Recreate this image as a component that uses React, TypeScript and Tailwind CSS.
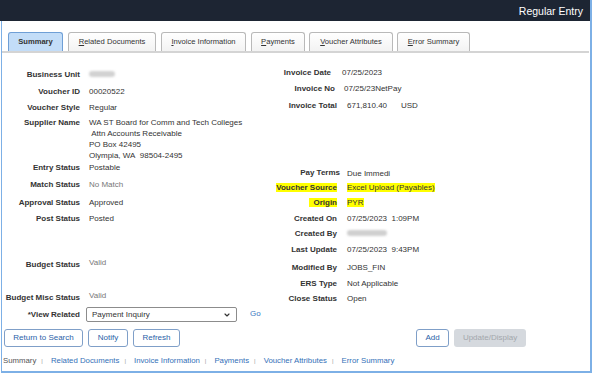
import React from 'react';
import { ChevronDown } from 'lucide-react';

const tabs = [
  { label: 'Summary', w: 'w-[55px]', ml: 'ml-[6px]', active: true },
  { label: 'Related Documents', w: 'w-[88px]', ml: 'ml-[5px]' },
  { label: 'Invoice Information', w: 'w-[85px]', ml: 'ml-[5px]' },
  { label: 'Payments', w: 'w-[54px]', ml: 'ml-[5px]' },
  { label: 'Voucher Attributes', w: 'w-[84px]', ml: 'ml-[4px]' },
  { label: 'Error Summary', w: 'w-[73px]', ml: 'ml-[4px]' },
];

const footerLinks = ['Related Documents', 'Invoice Information', 'Payments', 'Voucher Attributes', 'Error Summary'];

function LeftRow({ label, h, children }: { label: string; h: string; children?: React.ReactNode }) {
  return (
    <div className={`flex ${h} leading-[11px]`}>
      <div className="w-[78px] shrink-0 text-right font-bold text-[#333]">{label}</div>
      <div className="ml-[9px] text-[#333]">{children}</div>
    </div>
  );
}

function RightRow({
  label,
  h,
  lw = 'w-[87px]',
  gap = 'ml-[10px]',
  children,
}: {
  label: React.ReactNode;
  h: string;
  lw?: string;
  gap?: string;
  children?: React.ReactNode;
}) {
  return (
    <div className={`flex ${h} leading-[11px]`}>
      <div className={`${lw} shrink-0 text-right font-bold text-[#333]`}>{label}</div>
      <div className={`${gap} text-[#333]`}>{children}</div>
    </div>
  );
}

export default function App() {
  return (
    <div className="w-[593px] h-[373px] bg-white overflow-hidden font-['Liberation_Sans',Arial,sans-serif] text-[8px]">
      <div className="w-[592px] h-[373px] border-r-2 border-[#7db0e6] flex flex-col">
        <div className="h-[21px] shrink-0 bg-[#1d2533] text-white text-[10.5px] flex items-center justify-end pr-[7px] pt-[3px]">
          Regular Entry
        </div>

        <div className="flex-1 ml-[1px] border-l border-b-2 border-[#7db0e6] flex flex-col">
          {/* tabs */}
          <div className="h-[32px] shrink-0 flex items-end border-b-2 border-[#d4d4d4] mr-[1px]">
            {tabs.map((t) => (
              <div
                key={t.label}
                className={`${t.w} ${t.ml} h-[19px] flex items-center justify-center rounded-t-[3px] border border-b-0 text-[7.6px] text-[#333] ${
                  t.active
                    ? 'bg-[#c3ddf8] border-[#6f9fd6] font-bold'
                    : 'bg-gradient-to-b from-white to-[#f3f3f3] border-[#b9b9b9]'
                }`}
              >
                {t.active ? (
                  t.label
                ) : (
                  <span>
                    <span className="underline">{t.label[0]}</span>
                    {t.label.slice(1)}
                  </span>
                )}
              </div>
            ))}
          </div>

          {/* content */}
          <div className="h-[276px] shrink-0 flex">
            <div className="w-[248px] shrink-0 pt-[16px] flex flex-col">
              <LeftRow label="Business Unit" h="h-[17px]">
                <div className="mt-[2px] w-[26px] h-[6px] rounded-full bg-[#d2d2d2] blur-[1px]" />
              </LeftRow>
              <LeftRow label="Voucher ID" h="h-[16px]">00020522</LeftRow>
              <LeftRow label="Voucher Style" h="h-[15px]">Regular</LeftRow>
              <LeftRow label="Supplier Name" h="h-[45px]">
                <div>WA ST Board for Comm and Tech Colleges</div>
                <div>&nbsp;Attn Accounts Receivable</div>
                <div>PO Box 42495</div>
                <div>Olympia, WA&nbsp; 98504-2495</div>
              </LeftRow>
              <LeftRow label="Entry Status" h="h-[17px]">Postable</LeftRow>
              <LeftRow label="Match Status" h="h-[18px]">
                <span className="text-[#777]">No Match</span>
              </LeftRow>
              <LeftRow label="Approval Status" h="h-[16px]">Approved</LeftRow>
              <LeftRow label="Post Status" h="h-[46px]">Posted</LeftRow>
              <LeftRow label="Budget Status" h="h-[33px]">
                <span className="block -translate-y-[2px] text-[#777]">Valid</span>
              </LeftRow>
              <LeftRow label="Budget Misc Status" h="h-[15px]">
                <span className="block -translate-y-[2px] text-[#777]">Valid</span>
              </LeftRow>
              <div className="flex items-center h-[15px] w-[280px]">
                <div className="w-[78px] shrink-0 text-right font-bold text-[#333]">*View Related</div>
                <div className="ml-[6px] w-[151px] shrink-0 h-[15px] border border-[#8c8c8c] rounded-[2px] flex items-center justify-between pl-[5px] pr-[5px] text-[#333]">
                  <span>Payment Inquiry</span>
                  <ChevronDown size={8} strokeWidth={3.5} className="text-[#333]" />
                </div>
                <span className="ml-[13px] -translate-y-[1px] text-[#3a78c2]">Go</span>
              </div>
            </div>

            <div className="flex-1 pt-[14px] flex flex-col">
              <RightRow label="Invoice Date" h="h-[16px]" lw="w-[81px]" gap="ml-[11px]">
                07/25/2023
              </RightRow>
              <RightRow label="Invoice No" h="h-[17px]" lw="w-[85px]" gap="ml-[9px]">
                07/25/23NetPay
              </RightRow>
              <RightRow label="Invoice Total" h="h-[67px]">
                <div className="flex">
                  <span className="w-[54px]">671,810.40</span>
                  <span>USD</span>
                </div>
              </RightRow>
              <RightRow label="Pay Terms" h="h-[15px]" lw="w-[90px]" gap="ml-[7px]">
                <span className="block translate-y-[1px]">Due Immedi</span>
              </RightRow>
              <RightRow label={<span className="bg-[#ffff00]">Voucher Source</span>} h="h-[15px]">
                <span className="bg-[#ffff00]">Excel Upload (Payables)</span>
              </RightRow>
              <RightRow label={<span className="bg-[#ffff00] pl-[4px]">Origin</span>} h="h-[16px]">
                <span className="bg-[#ffff00] pr-[1px]">PYR</span>
              </RightRow>
              <RightRow label="Created On" h="h-[15px]">
                07/25/2023&nbsp; 1:09PM
              </RightRow>
              <RightRow label="Created By" h="h-[16px]">
                <div className="mt-[2px] w-[40px] h-[6px] rounded-full bg-[#d0d0d0] blur-[1px]" />
              </RightRow>
              <RightRow label="Last Update" h="h-[18px]">
                07/25/2023&nbsp; 9:43PM
              </RightRow>
              <RightRow label="Modified By" h="h-[16px]">
                JOBS_FIN
              </RightRow>
              <RightRow label="ERS Type" h="h-[15px]">
                Not Applicable
              </RightRow>
              <RightRow label="Close Status" h="h-[15px]">
                Open
              </RightRow>
            </div>
          </div>

          {/* buttons */}
          <div className="h-[18px] shrink-0 flex items-stretch pl-[2px] pr-[64px] text-[8px]">
            <button className="w-[79px] border border-[#7f9fc8] rounded-[3px] bg-white text-[#2a62a8]">
              Return to Search
            </button>
            <button className="ml-[5px] w-[40px] border border-[#7f9fc8] rounded-[3px] bg-white text-[#2a62a8]">
              Notify
            </button>
            <button className="ml-[5px] w-[47px] border border-[#7f9fc8] rounded-[3px] bg-white text-[#2a62a8]">
              Refresh
            </button>
            <button className="ml-auto w-[33px] border border-[#7f9fc8] rounded-[3px] bg-white text-[#2a62a8]">
              Add
            </button>
            <button className="ml-[5px] w-[72px] rounded-[3px] bg-[#d5d9de] text-[#a3a7ac]">
              Update/Display
            </button>
          </div>

          {/* footer links */}
          <div className="mt-[9px] pl-[1px] flex items-center leading-[10px] text-[7.8px]">
            <span className="text-[#555]">Summary</span>
            {footerLinks.map((l) => (
              <React.Fragment key={l}>
                <span className="ml-[5px] mr-[8px] text-[6px] text-[#999]">|</span>
                <span className="text-[#3470b8]">{l}</span>
              </React.Fragment>
            ))}
          </div>
        </div>
      </div>
    </div>
  );
}
